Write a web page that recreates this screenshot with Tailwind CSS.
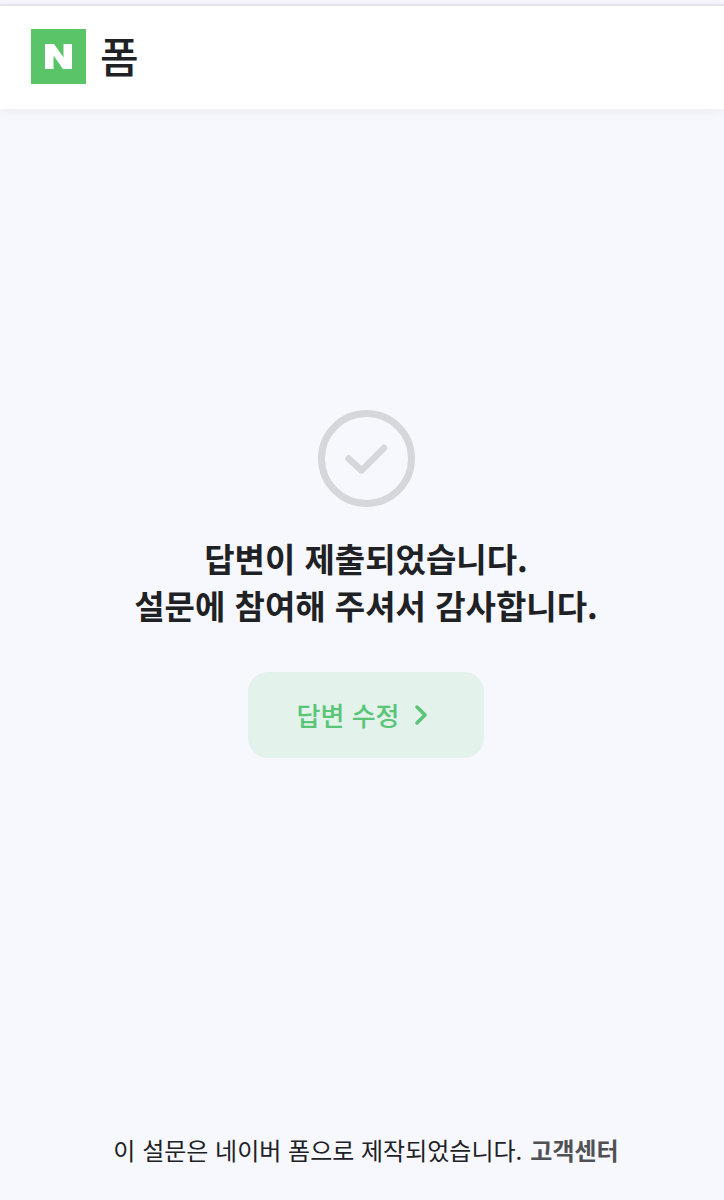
<!DOCTYPE html>
<html lang="ko">
<head>
    <meta charset="UTF-8">
    <meta name="viewport" content="width=device-width, initial-scale=1.0">
    <title>네이버 폼</title>
    <script src="https://cdn.jsdelivr.net/npm/@tailwindcss/browser@4"></script>
</head>
<body class="bg-[#f7f8fd] font-['Noto_Sans_CJK_KR',sans-serif] text-[#202124]">
    <div class="min-h-screen flex flex-col pt-1">
        <!-- Header -->
        <header class="flex items-center gap-[14px] px-[31px] pt-[23px] pb-[25px] bg-white border-t-2 border-[#e3e4ea] shadow-[0_2px_12px_rgba(30,40,90,0.06)]">
            <svg class="size-[55px]" viewBox="0 0 55 55" role="img" aria-label="네이버">
                <rect width="55" height="55" fill="#5ac568" />
                <path d="M14 15h9l9.500 13.500V15H41v25h-9L22.500 26.500V40H14z" fill="#fff" />
            </svg>
            <h1 class="pb-1 text-[42px] leading-none font-medium">폼</h1>
        </header>

        <!-- Submit result -->
        <main class="flex-1 flex flex-col items-center justify-center pl-2 pb-19">
            <svg class="size-[97px]" viewBox="0 0 97 97" fill="none" stroke="#d5d7db" aria-hidden="true">
                <circle cx="48.500" cy="48.500" r="45" stroke-width="7" />
                <path d="M30.500 48.500L43.500 60.500L66 38" stroke-width="6.500" stroke-linecap="round" stroke-linejoin="round" />
            </svg>
            <p class="mt-7 text-[33px] leading-[47px] font-bold text-center">
                답변이 제출되었습니다.<br>
                설문에 참여해 주셔서 감사합니다.
            </p>
            <button type="button" class="mt-[43px] pr-2 flex items-center justify-center gap-4 w-[236px] h-[86px] rounded-[20px] bg-[#e3f2eb] text-[#5ac576] text-[26px] font-medium">
                답변 수정
                <svg class="w-3 h-5" viewBox="0 0 12 20" fill="none" stroke="currentColor" stroke-width="3.500" stroke-linecap="round" stroke-linejoin="round" aria-hidden="true">
                    <path d="M2 2l8 8l-8 8" />
                </svg>
            </button>
        </main>

        <!-- Footer -->
        <footer class="flex items-center justify-center gap-2 pl-2 pb-[34px] text-2xl">
            <p>이 설문은 네이버 폼으로 제작되었습니다.</p>
            <a href="#" class="font-bold text-[#505154]">고객센터</a>
        </footer>
    </div>
</body>
</html>
